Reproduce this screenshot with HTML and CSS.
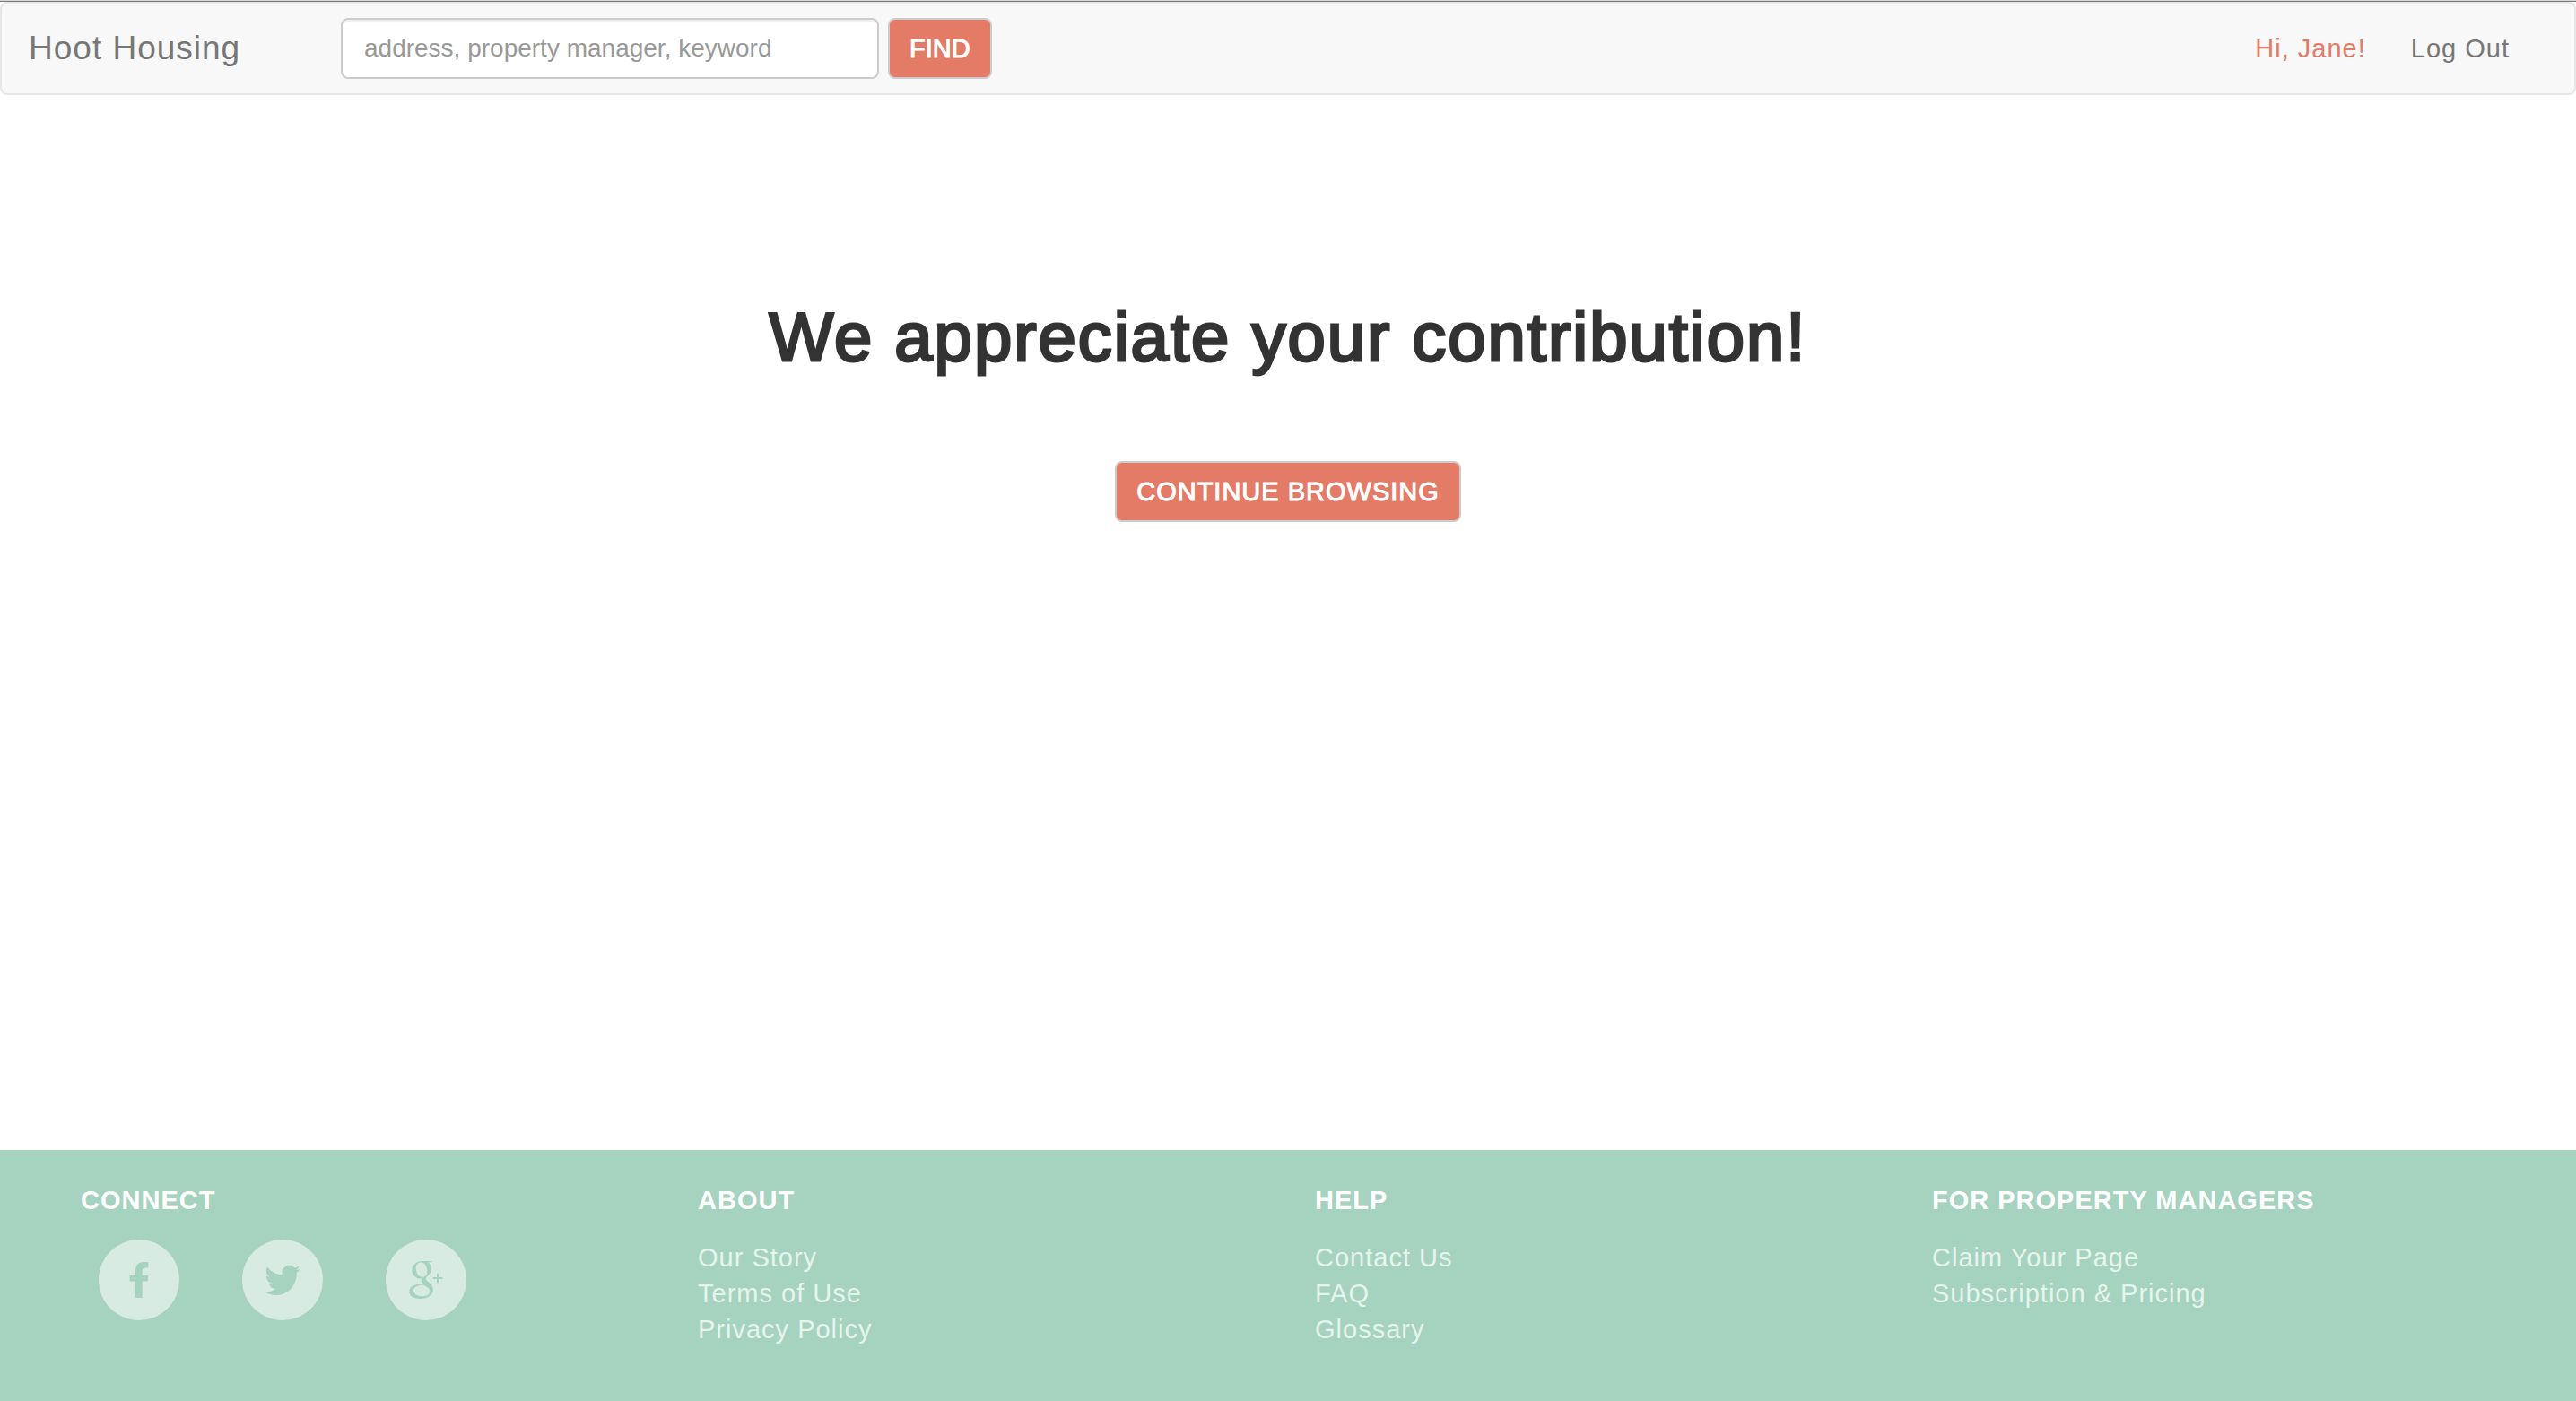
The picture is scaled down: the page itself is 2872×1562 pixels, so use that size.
FILE: index.html
```html
<!DOCTYPE html>
<html lang="en">
<head>
  <meta charset="utf-8">
  <title>Hoot Housing</title>
  <link rel="stylesheet" href="styles.css">
</head>
<body>
  <header class="navbar">
    <a class="brand" href="#">Hoot Housing</a>
    <form class="search" role="search">
      <input class="search-input" type="text" aria-label="Search" placeholder="address, property manager, keyword">
      <button class="btn" type="button">FIND</button>
    </form>
    <nav class="account">
      <a class="account-user" href="#">Hi, Jane!</a>
      <a href="#">Log Out</a>
    </nav>
  </header>

  <main class="content">
    <h1>We appreciate your contribution!</h1>
    <button class="btn" type="button">CONTINUE BROWSING</button>
  </main>

  <footer class="footer">
    <section>
      <h2>CONNECT</h2>
      <div class="social">
        <a href="#" aria-label="Facebook">
          <svg viewBox="0 0 90 90"><path d="M55.5 25.3 55.2 31.6H51.5Q48.6 31.6 48.6 34.8V40H55.2L54.6 46.4H48.6V65H41V46.4H34.6V40H41V35Q41 25 50 25 53.5 25 55.5 25.3Z"/></svg>
        </a>
        <a href="#" aria-label="Twitter">
          <svg viewBox="0 0 90 90"><path transform="translate(25.2 25) scale(1.65 1.7)" d="M23.953 4.57a10 10 0 01-2.825.775 4.958 4.958 0 002.163-2.723c-.951.555-2.005.959-3.127 1.184a4.92 4.92 0 00-8.384 4.482C7.69 8.095 4.067 6.13 1.64 3.162a4.822 4.822 0 00-.666 2.475c0 1.71.87 3.213 2.188 4.096a4.904 4.904 0 01-2.228-.616v.06a4.923 4.923 0 003.946 4.827 4.996 4.996 0 01-2.212.085 4.936 4.936 0 004.604 3.417 9.867 9.867 0 01-6.102 2.105c-.39 0-.779-.023-1.17-.067a13.995 13.995 0 007.557 2.209c9.053 0 13.998-7.496 13.998-13.985 0-.21 0-.42-.015-.63A9.935 9.935 0 0024 4.59z"/></svg>
        </a>
        <a href="#" aria-label="Google Plus">
          <svg viewBox="0 0 90 90"><path fill-rule="evenodd" d="M52.8 24H41C34 24 29.3 28.5 29.3 34.2 29.3 39.8 33.5 43.5 39 43.5H40.2C39.4 45.5 39.7 47 41 49 32.5 49.2 26.3 52.2 26.3 58 26.3 63 31.5 66 38.5 66 47.5 66 52.8 61.5 52.8 56 52.8 52 51 49.8 48 47.5 46 45.9 44.8 45 44.8 43.6 44.8 42.3 46 41.3 47.5 40 49.7 38.1 51 36 51 32.8 51 29.5 49.5 27.3 47.3 25.6H49.9ZM39.5 25.5C43.8 25.5 46.3 30.5 46.3 35.5 46.3 39.5 44.2 41.8 41 41.8 36.7 41.8 33.7 37 33.7 31.8 33.7 28 35.9 25.5 39.5 25.5ZM42.5 50.7C46.5 53.3 49.3 54.8 49.3 57.8 49.3 61 46 63.2 41 63.2 35 63.2 31 60.7 31 57 31 52.5 35.8 50.7 42.5 50.7ZM57 38H59.2V42H63.5V44H59.2V48.2H57V44H52.7V42H57Z"/></svg>
        </a>
      </div>
    </section>
    <section>
      <h2>ABOUT</h2>
      <ul>
        <li><a href="#">Our Story</a></li>
        <li><a href="#">Terms of Use</a></li>
        <li><a href="#">Privacy Policy</a></li>
      </ul>
    </section>
    <section>
      <h2>HELP</h2>
      <ul>
        <li><a href="#">Contact Us</a></li>
        <li><a href="#">FAQ</a></li>
        <li><a href="#">Glossary</a></li>
      </ul>
    </section>
    <section>
      <h2>FOR PROPERTY MANAGERS</h2>
      <ul>
        <li><a href="#">Claim Your Page</a></li>
        <li><a href="#">Subscription &amp; Pricing</a></li>
      </ul>
    </section>
  </footer>
</body>
</html>
```
FILE: styles.css
```css
* {
  box-sizing: border-box;
}

html {
  border-top: 1px solid #d6dad6;
}

body {
  display: flex;
  flex-direction: column;
  min-height: calc(100vh - 1px);
  margin: 0;
  border-top: 1px solid #777a77;
  background: #fff;
  color: #333;
  font: 29px/40px "Liberation Sans", Arial, sans-serif;
  letter-spacing: 1px;
}

a {
  color: inherit;
  text-decoration: none;
}

.navbar {
  display: flex;
  align-items: center;
  height: 104px;
  padding: 0 72px 0 30px;
  border: 2px solid #e7e7e7;
  border-radius: 8px;
  background: #f8f8f8;
  color: #777;
}

.brand {
  width: 348px;
  font-size: 37px;
}

.search {
  display: flex;
  gap: 10px;
  letter-spacing: normal;
}

.search-input {
  width: 600px;
  height: 68px;
  padding: 0 24px;
  border: 2px solid #ccc;
  border-radius: 8px;
  background: #fff;
  box-shadow: inset 0 2px 2px rgba(0, 0, 0, 0.075);
  color: #555;
  font: inherit;
  font-size: 28px;
}

.search-input::placeholder {
  color: #999;
}

.btn {
  height: 68px;
  padding: 0 22px;
  border: 2px solid #ccc;
  border-radius: 8px;
  background: #e37b66;
  color: #fff;
  font: inherit;
  letter-spacing: inherit;
  -webkit-text-stroke: 1px #fff;
}

.account {
  display: flex;
  gap: 50px;
  margin-left: auto;
}

.account-user {
  color: #e37b66;
}

.content {
  flex: 1;
  display: flex;
  flex-direction: column;
  align-items: center;
  padding-top: 230px;
}

h1 {
  margin: 0 0 98px;
  font-size: 76px;
  font-weight: normal;
  line-height: 80px;
  letter-spacing: 2px;
  -webkit-text-stroke: 3px #333;
}

.footer {
  display: grid;
  grid-template-columns: repeat(4, 1fr);
  min-height: 280px;
  padding: 36px 60px;
  background: #a5d3bf;
  color: #e7f4ee;
}

.footer section {
  padding-left: 30px;
}

h2 {
  margin: 0 0 24px;
  color: #fff;
  font-size: 29px;
  line-height: 40px;
}

ul {
  margin: 0;
  padding: 0;
  list-style: none;
}

.social {
  display: flex;
  gap: 70px;
  padding-left: 20px;
}

.social a {
  width: 90px;
  height: 90px;
  border-radius: 50%;
  background: #d8ebe2;
}

.social svg {
  display: block;
  fill: #a5d3bf;
}
```
